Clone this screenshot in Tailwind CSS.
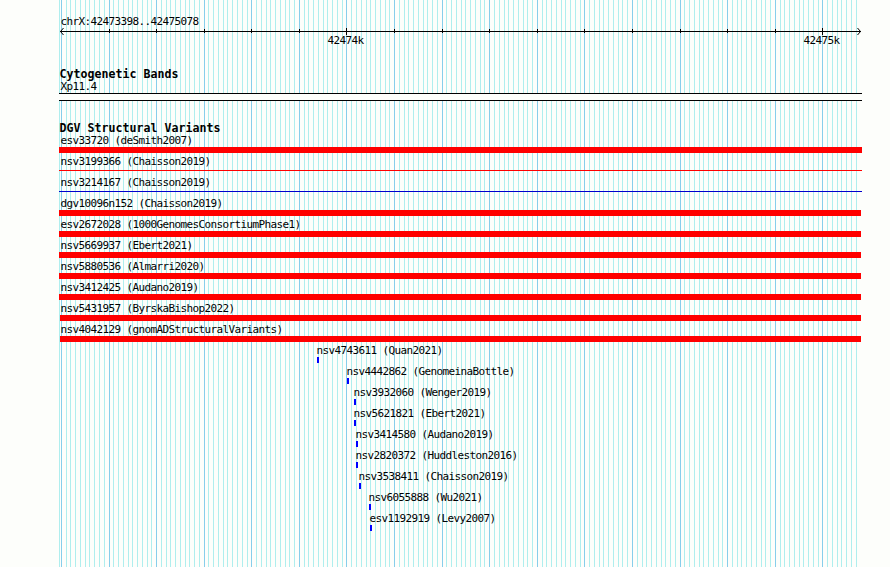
<!DOCTYPE html>
<html lang="en">

<head>
    <meta charset="UTF-8">
    <meta name="viewport" content="width=device-width, initial-scale=1.0">
    <title>chrX:42473398..42475078</title>
    <script src="https://cdn.jsdelivr.net/npm/@tailwindcss/browser@4"></script>
</head>

<body class="bg-[#fdfefb]">
    <main class="relative isolate w-[890px] h-[567px] overflow-hidden pt-[15px] pl-[59px] text-black text-[11px] leading-[13px] tracking-[-0.62px] font-['DejaVu_Sans_Mono',monospace]">

        <!-- Grid -->
        <svg id="grid" class="absolute inset-0 -z-10" width="890" height="567" shape-rendering="crispEdges"></svg>

        <!-- Ruler -->
        <p class="pl-[1.5px]">chrX:42473398..42475078</p>
        <svg id="ruler" class="block -ml-[59px]" width="890" height="40" viewBox="0 28 890 40" fill="none" stroke="#000">
            <path d="M60 31.5H861" shape-rendering="crispEdges" />
            <path d="M63.5 28L60.5 31.5L63.5 35M857.5 28L860.5 31.5L857.5 35" />
            <g id="ticks" fill="#000" stroke="none" shape-rendering="crispEdges"></g>
            <text x="327.5" y="44" fill="#000" stroke="none">42474k</text>
            <text x="803.5" y="44" fill="#000" stroke="none">42475k</text>
        </svg>

        <!-- Cytogenetic Bands -->
        <section class="h-[54px]">
            <h2 class="pl-[0.5px] text-[11.6px] leading-[13px] tracking-[0.016px] font-bold">Cytogenetic Bands</h2>
            <p class="pl-[1.5px] h-3 leading-3">Xp11.4</p>
            <div class="w-[803px] h-2 border-y border-black bg-[#fdfefb]"></div>
        </section>

        <!-- DGV Structural Variants -->
        <section>
            <h2 class="pl-[0.5px] h-3 text-[11.6px] leading-[13px] tracking-[0.016px] font-bold">DGV Structural Variants</h2>
            <div id="variants"></div>
        </section>
    </main>

    <script>
        const start = 42473398;
        const end = 42475078;
        const toX = pos => Math.floor(60 + (pos - start + 1) * 800 / 1681);

        const rect = (x, y, w, h, fill) =>
            `<rect x="${x}" y="${y}" width="${w}" height="${h}" fill="${fill}" />`;

        let lines = rect(59, 0, 1, 567, "#afeeee");
        let ticks = "";
        for (let pos = 42473400; pos <= end - 2; pos += 10) {
            const x = toX(pos);
            const major = pos % 100 === 0;
            lines += rect(x, 0, 1, 567, major ? "#87ceeb" : "#afeeee");
            if (pos % 1000 === 0) {
                ticks += rect(x, 28, 1, 7, "#000");
            } else if (major && x > 61) {
                ticks += rect(x, 29, 1, 4, "#000");
            }
        }
        document.getElementById("grid").innerHTML = lines;
        document.getElementById("ticks").innerHTML = ticks;

        const bar = "h-1.5 bg-[#ff0000]";
        const mark = "h-1.5 bg-[#0000ff]";
        const redLine = "h-px mt-[2px] bg-[#ff0000]";
        const blueLine = "h-px mt-[2px] bg-[#0000cd]";

        // label, glyph, left, width
        const variants = [
            ["esv33720 (deSmith2007)", bar, 59, 803],
            ["nsv3199366 (Chaisson2019)", redLine, 59, 803],
            ["nsv3214167 (Chaisson2019)", blueLine, 59, 803],
            ["dgv10096n152 (Chaisson2019)", bar, 59, 802],
            ["esv2672028 (1000GenomesConsortiumPhase1)", bar, 59, 802],
            ["nsv5669937 (Ebert2021)", bar, 59, 802],
            ["nsv5880536 (Almarri2020)", bar, 59, 802],
            ["nsv3412425 (Audano2019)", bar, 59, 802],
            ["nsv5431957 (ByrskaBishop2022)", bar, 60, 801],
            ["nsv4042129 (gnomADStructuralVariants)", bar, 60, 801],
            ["nsv4743611 (Quan2021)", mark, 317, 2],
            ["nsv4442862 (GenomeinaBottle)", mark, 347, 2],
            ["nsv3932060 (Wenger2019)", mark, 354, 2],
            ["nsv5621821 (Ebert2021)", mark, 354, 2],
            ["nsv3414580 (Audano2019)", mark, 356, 2],
            ["nsv2820372 (Huddleston2016)", mark, 356, 2],
            ["nsv3538411 (Chaisson2019)", mark, 359, 2],
            ["nsv6055888 (Wu2021)", mark, 369, 2],
            ["esv1192919 (Levy2007)", mark, 370, 2]
        ];

        document.getElementById("variants").innerHTML = variants.map(([label, glyph, left, width]) => `
            <div class="flex flex-col h-[21px]">
                <p class="whitespace-nowrap" style="padding-left: ${Math.max(left - 60, 1) + 0.5}px">${label}</p>
                <div class="${glyph}" style="margin-left: ${left - 59}px; width: ${width}px"></div>
            </div>`).join("");
    </script>
</body>

</html>
